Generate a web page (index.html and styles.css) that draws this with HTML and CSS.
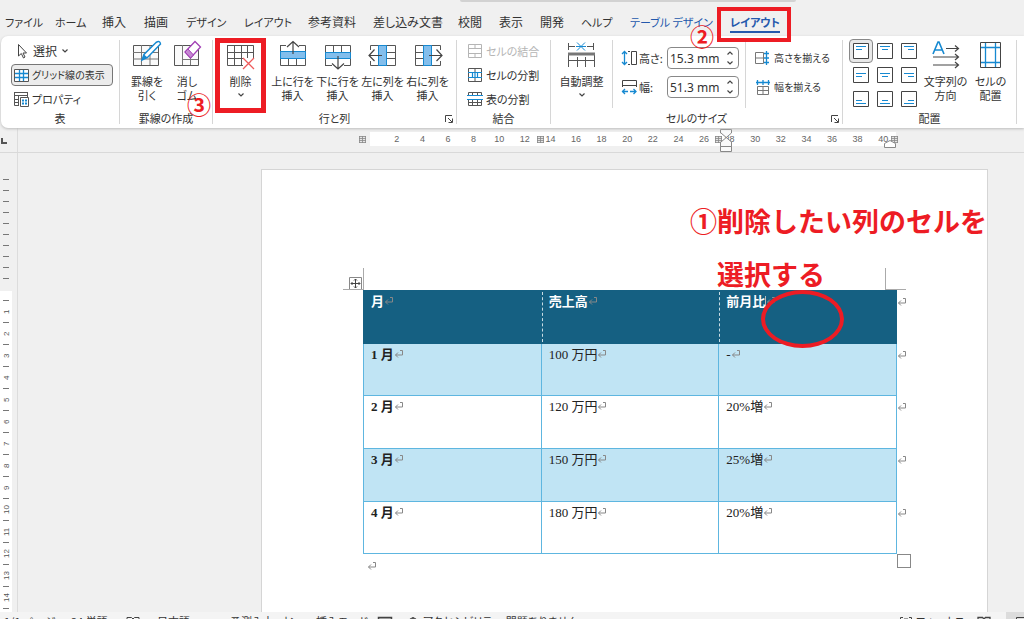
FILE: index.html
```html
<!DOCTYPE html>
<html lang="ja">
<head>
<meta charset="utf-8">
<title>文書 - レイアウト</title>
<link rel="stylesheet" href="styles.css">
</head>
<body>
<svg class="sprite" aria-hidden="true">
  <symbol id="ret" viewBox="0 0 10 10"><path d="M6 1.5H8.5V6H1.5M4 3.5L1.5 6L4 8.5" fill="none" stroke="currentColor"/></symbol>
  <symbol id="chev" viewBox="0 0 8 6"><path d="M1.5 1.5L4 4L6.500 1.500" fill="none" stroke="#444" stroke-width="1.2"/></symbol>
  <symbol id="up" viewBox="0 0 8 6"><path d="M1.500 4.500L4 2L6.500 4.500" fill="none" stroke="#444" stroke-width="1.200"/></symbol>
  <symbol id="launch" viewBox="0 0 8 8"><path d="M.5 7V.5H7M3 3L7 7M7.500 3.500V7.500H3.500" fill="none" stroke="#444"/></symbol>
  <symbol id="marker" viewBox="0 0 7 7"><path d="M0 .5H7M0 2.500H7M0 4.500H7M0 6.500H7M.5 0V7M3.500 0V7M6.500 0V7" stroke="#888" stroke-width=".8"/></symbol>
</svg>
<div class="app">
  <div class="search-edge"></div>
  <nav class="tabs">
    <button class="tab kana">ファイル</button><button class="tab kana">ホーム</button><button class="tab">挿入</button><button class="tab">描画</button><button class="tab kana">デザイン</button><button class="tab kana">レイアウト</button><button class="tab">参考資料</button><button class="tab">差し込み文書</button><button class="tab">校閲</button><button class="tab">表示</button><button class="tab">開発</button><button class="tab kana">ヘルプ</button><button class="tab kana context">テーブル デザイン</button><button class="tab kana context active">レイアウト<span class="badge step2">②</span></button>
  </nav>

  <section class="ribbon">
    <div class="group">
      <div class="rows first">
        <button class="row"><svg width="16" height="16" viewBox="0 0 16 16"><path d="M5.500 1.500V13L8.300 10.500L10.500 15L12 14L10 10H13.500Z" fill="#fff" stroke="#444"/></svg>選択<svg width="8" height="6"><use href="#chev"/></svg></button>
        <button class="row pressed"><svg width="16" height="16" viewBox="0 0 16 16"><path d="M1.500 2.500H15.500V14.500H1.500Z" fill="#fff" stroke="#555"/><path d="M6.500 3V14M10.500 3V14M2 6.500H15M2 10.500H15" stroke="#1689d1" stroke-width="1.300"/></svg>グリッド線の表示</button>
        <button class="row"><svg width="16" height="16" viewBox="0 0 16 16"><path d="M1 1.500H15M1.500 1V14.500H6M5.500 4V14M1 4.500H15M1 8.500H6M1 11.500H6M14.500 1V6" stroke="#555" fill="none"/><path d="M7.500 6.500H15.500V15.500H7.500Z" fill="#fff" stroke="#555"/><path d="M9 9.500H11M12 9.500H14M9 12.500H11M12 12.500H14" stroke="#1689d1" stroke-width="2"/></svg>プロパティ</button>
      </div>
      <div class="caption">表</div>
    </div>

    <div class="group">
      <div class="bigs pair">
        <button class="big"><svg width="30" height="28" viewBox="0 0 30 28"><path d="M1.500 5.500H26.500V25.500H1.500Z" fill="#fafafa" stroke="#555"/><path d="M9.500 5V25M18 5V25M1 12.500H26M1 19H26" stroke="#777"/><path d="M10 20L12 14.500L24 2.500Q28 0 28.500 4L15.500 17.500Z" fill="#fff" stroke="#1689d1" stroke-width="1.500"/><path d="M10 20L12 14.500L15.500 17.500Z" fill="#1689d1"/></svg><span>罫線を<br>引く</span></button>
        <button class="big"><svg width="30" height="28" viewBox="0 0 30 28"><path d="M2.500 5.500H26.500V25.500H2.500Z" fill="#fafafa" stroke="#555"/><path d="M10.500 5V25M18.500 17V25M11 19.500H26" stroke="#777"/><path d="M13 12L23 1.500L28.500 7L18.500 18Z" fill="#fff" stroke="#a23fb5" stroke-width="1.300"/><path d="M13 12L16 9L21.500 15L18.500 18Z" fill="#c588d2" stroke="#a23fb5"/></svg><span>消し<br>ゴム</span></button>
      </div>
      <div class="caption">罫線の作成<span class="badge step3">③</span></div>
    </div>

    <div class="group">
      <div class="bigs five">
        <button class="big framed"><svg width="30" height="28" viewBox="0 0 30 28"><path d="M1.500 5.500H27.500V18M17 25.500H1.500V5M8.500 5V25M15.500 5V25M21.500 5V18M1 12.500H27M1 18.500H17" fill="none" stroke="#555"/><path d="M17 18L28 29M28 18L17 29" stroke="#ef5a5a" stroke-width="1.300"/></svg><span>削除</span><svg width="8" height="6"><use href="#chev"/></svg></button>
        <button class="big"><svg width="30" height="28" viewBox="0 0 30 28"><path d="M2 5.500H8M21 5.500H27.500V25.500H2.500V5M10.500 18V25M18.500 18V25" fill="none" stroke="#555"/><path d="M2.500 11.500H27.500V18.500H2.500Z" fill="#83beec" stroke="#1689d1"/><path d="M15 14V1.500M9 7L15 1.500L21 7" fill="none" stroke="#444" stroke-width="1.200"/></svg><span>上に行を<br>挿入</span></button>
        <button class="big"><svg width="30" height="28" viewBox="0 0 30 28"><path d="M2.500 25V5.500H27.500V25.500H21M2 25.500H9M10.500 5V12M18.500 5V12" fill="none" stroke="#555"/><path d="M2.500 12.500H27.500V18.500H2.500Z" fill="#83beec" stroke="#1689d1"/><path d="M15 16V29M9 23.500L15 29L21 23.500" fill="none" stroke="#444" stroke-width="1.200"/></svg><span>下に行を<br>挿入</span></button>
        <button class="big"><svg width="30" height="28" viewBox="0 0 30 28"><path d="M2.500 10V5.500H27.500V25.500H2.500V21M19 12.500H27M19 18.500H27" fill="none" stroke="#555"/><path d="M10.500 5.500H18.500V25.500H10.500Z" fill="#83beec" stroke="#1689d1"/><path d="M14 15.500H1M6.500 9.500L1 15.500L6.500 21" fill="none" stroke="#444" stroke-width="1.200"/></svg><span>左に列を<br>挿入</span></button>
        <button class="big"><svg width="30" height="28" viewBox="0 0 30 28"><path d="M27.500 10V5.500H2.500V25.500H27.500V21M3 12.500H11M3 18.500H11" fill="none" stroke="#555"/><path d="M10.500 5.500H18.500V25.500H10.500Z" fill="#83beec" stroke="#1689d1"/><path d="M16 15.500H29M23.500 9.500L29 15.500L23.500 21" fill="none" stroke="#444" stroke-width="1.200"/></svg><span>右に列を<br>挿入</span></button>
      </div>
      <div class="caption">行と列<svg class="launch" width="8" height="8"><use href="#launch"/></svg></div>
    </div>

    <div class="group">
      <div class="rows merge">
        <button class="row" disabled><svg width="16" height="16" viewBox="0 0 16 16"><path d="M1.500 1.500H14.500V14.500H1.500ZM1 5.500H15M1 10.500H15M8 1V5.500M8 10.500V15" fill="none" stroke="#b5b5b5"/></svg>セルの結合</button>
        <button class="row"><svg width="16" height="16" viewBox="0 0 16 16"><path d="M1.500 1.500H14.500V14.500H1.500ZM8 1V5M8 11V15" fill="none" stroke="#555"/><path d="M1 5.500H15M1 10.500H15M5.500 5V11M8 5V11M10.500 5V11" stroke="#1689d1" stroke-width="1.200"/></svg>セルの分割</button>
        <button class="row"><svg width="16" height="16" viewBox="0 0 16 16"><path d="M1.500 4V1.500H14.500V4M5.500 1V4M10.500 1V4M1.500 9V14.500H14.500V9M1 11.500H15M5.500 9V15M10.500 9V15" fill="none" stroke="#555"/><path d="M0 4.500H16M0 8.500H16" stroke="#1689d1" stroke-width="1.200"/></svg>表の分割</button>
      </div>
      <div class="caption">結合</div>
    </div>

    <div class="group">
      <div class="size">
        <button class="big fit"><svg width="30" height="28" viewBox="0 0 30 28"><path d="M1.500 3V10M26.500 3V10M2 6.500H8M20 6.500H26M1.500 27V13.500H27.500V27M10.500 17V27M18.500 17V27M2 20.500H27" fill="none" stroke="#555"/><path d="M1 14H28" stroke="#777" stroke-width="3"/><path d="M10 2.500L18 10.500M18 2.500L10 10.500M9 6.500H19" stroke="#1689d1"/></svg><span>自動調整</span><svg width="8" height="6"><use href="#chev"/></svg></button>
        <div class="fields">
          <div class="field"><label for="h"><svg width="17" height="16" viewBox="0 0 17 16"><path d="M3.500 2V14M1 4L3.500 1.500L6 4M1 12L3.500 14.500L6 12" fill="none" stroke="#1689d1" stroke-width="1.300"/><path d="M7 1.500H9M7 14.500H9M10.500 1.500H15.500V14.500H10.500Z" fill="none" stroke="#444"/></svg>高さ:</label><span class="spin"><input id="h" value="15.3 mm"><span class="arrows"><button aria-label="増やす"><svg width="8" height="6"><use href="#up"/></svg></button><button aria-label="減らす"><svg width="8" height="6"><use href="#chev"/></svg></button></span></span></div>
          <div class="field"><label for="w"><svg width="17" height="16" viewBox="0 0 17 16"><path d="M1.500 8V1.500H15.500V8M1 6.500H16" fill="none" stroke="#444"/><path d="M1 12.500H7M9 12.500H15M4 10L1.500 12.500L4 15M12.500 10L15 12.500L12.500 15" fill="none" stroke="#1689d1" stroke-width="1.300"/></svg>幅:</label><span class="spin"><input id="w" value="51.3 mm"><span class="arrows"><button aria-label="増やす"><svg width="8" height="6"><use href="#up"/></svg></button><button aria-label="減らす"><svg width="8" height="6"><use href="#chev"/></svg></button></span></span></div>
        </div>
        <div class="even">
          <button class="row"><svg width="16" height="16" viewBox="0 0 16 16"><path d="M.5 2.500H8.500V13.500H.5ZM.5 8H8" fill="none" stroke="#777"/><path d="M11.500 1V15M9 3.500H14M9 8H14M9 12.500H14" stroke="#1689d1" stroke-width="1.300"/></svg>高さを揃える</button>
          <button class="row"><svg width="16" height="16" viewBox="0 0 16 16"><path d="M2.500 7.500H13.500V15.500H2.500ZM8 7V15M2 11.500H14" fill="none" stroke="#777"/><path d="M1 3.500H15M2.500 1V6M8 1V6M13.500 1V6" stroke="#1689d1" stroke-width="1.300"/></svg>幅を揃える</button>
        </div>
      </div>
      <div class="caption">セルのサイズ<svg class="launch" width="8" height="8"><use href="#launch"/></svg></div>
    </div>

    <div class="group">
      <div class="align">
        <div class="nine">
          <button class="cell on" aria-label="上揃え (左)"><svg width="16" height="16"><path class="bx" d="M.5.5H15.500V15.500H.5Z"/><path class="ln" d="M3 3.500H13M3 6.500H9"/></svg></button>
          <button class="cell" aria-label="上揃え (中央)"><svg width="16" height="16"><path class="bx" d="M.5.5H15.500V15.500H.5Z"/><path class="ln" d="M3 3.500H13M5 6.500H11"/></svg></button>
          <button class="cell" aria-label="上揃え (右)"><svg width="16" height="16"><path class="bx" d="M.5.5H15.500V15.500H.5Z"/><path class="ln" d="M3 3.500H13M7 6.500H13"/></svg></button>
          <button class="cell" aria-label="中央揃え (左)"><svg width="16" height="16"><path class="bx" d="M.5.5H15.500V15.500H.5Z"/><path class="ln" d="M3 6.500H13M3 9.500H9"/></svg></button>
          <button class="cell" aria-label="中央揃え"><svg width="16" height="16"><path class="bx" d="M.5.5H15.500V15.500H.5Z"/><path class="ln" d="M3 6.500H13M5 9.500H11"/></svg></button>
          <button class="cell" aria-label="中央揃え (右)"><svg width="16" height="16"><path class="bx" d="M.5.5H15.500V15.500H.5Z"/><path class="ln" d="M3 6.500H13M7 9.500H13"/></svg></button>
          <button class="cell" aria-label="下揃え (左)"><svg width="16" height="16"><path class="bx" d="M.5.5H15.500V15.500H.5Z"/><path class="ln" d="M3 9.500H9M3 12.500H13"/></svg></button>
          <button class="cell" aria-label="下揃え (中央)"><svg width="16" height="16"><path class="bx" d="M.5.5H15.500V15.500H.5Z"/><path class="ln" d="M5 9.500H11M3 12.500H13"/></svg></button>
          <button class="cell" aria-label="下揃え (右)"><svg width="16" height="16"><path class="bx" d="M.5.5H15.500V15.500H.5Z"/><path class="ln" d="M7 9.500H13M3 12.500H13"/></svg></button>
        </div>
        <button class="big"><svg width="30" height="28" viewBox="0 0 30 28"><path d="M2 14L7 2H8L13 14M4 10H11" fill="none" stroke="#1689d1" stroke-width="1.600"/><path d="M15 8.500H27M24 5.500L27.500 8.500L24 11.500M2 17H27M24 14L27.500 17L24 20M2 25H27M24 22L27.500 25L24 28" fill="none" stroke="#444" stroke-width="1.200"/></svg><span>文字列の<br>方向</span></button>
        <button class="big"><svg width="30" height="28" viewBox="0 0 30 28"><path d="M4.500 2.500H24.500V27.500H4.500Z" fill="#fff" stroke="#444"/><path d="M9.500 3V27M19.500 3V27M5 7.500H24M5 22.500H24" stroke="#1689d1" stroke-width="1.300"/></svg><span>セルの<br>配置</span></button>
      </div>
      <div class="caption">配置</div>
    </div>
  </section>

  <div class="hruler">
    <div class="tabstop"><svg width="6" height="6"><path d="M1 0V5H6" fill="none" stroke="#555" stroke-width="2"/></svg></div>
    <div class="scale">
      <svg class="mk" width="7" height="7"><use href="#marker"/></svg>
      <div class="numbers"><span>2</span><span>4</span><span>6</span><span>8</span><span>10</span><span>12</span><span>14</span><span>16</span><span>18</span><span>20</span><span>22</span><span>24</span><span>26</span><span>28</span><span>30</span><span>32</span><span>34</span><span>36</span><span>38</span><span>40</span></div>
      <svg class="mk over m1" width="7" height="7"><use href="#marker"/></svg>
      <svg class="mk over m2" width="7" height="7"><use href="#marker"/></svg>
      <svg class="mk over m3" width="7" height="7"><use href="#marker"/></svg>
      <svg class="over indent" width="12" height="24" viewBox="0 0 12 24"><path d="M.5.500H11.500V4L1 13H.5V17.500H11.500V13L1 4H.5ZM.5 17.500H11.500V22.500H.5Z" fill="#fafafa" stroke="#888"/></svg>
      <svg class="over right" width="12" height="8" viewBox="0 0 12 8"><path d="M.5 7.500V3.500L6 .5L11.500 3.500V7.500Z" fill="#fff" stroke="#888"/></svg>
    </div>
  </div>

  <main class="work">
    <div class="vruler">
      <div class="margin"><i></i><i></i><i></i><i></i><i></i><i></i><i></i><i></i><i></i><i></i></div>
      <div class="body"><i></i><b>1</b><i></i><b>2</b><i></i><b>3</b><i></i><b>4</b><i></i><b>5</b><i></i><b>6</b><i></i><b>7</b><i></i><b>8</b><i></i><b>9</b><i></i><b>10</b><i></i><b>11</b><i></i><b>12</b><i></i><b>13</b><i></i><b>14</b><i></i></div>
    </div>
    <div class="canvas">
      <article class="page">
        <div class="sheet">
          <svg class="move" width="13" height="13" viewBox="0 0 13 13"><path d="M.5.5H12.500V12.500H.5Z" fill="#fff" stroke="#888"/><path d="M6.500 2V11M2 6.500H11M5 3.500L6.500 2L8 3.500M5 9.500L6.500 11L8 9.500M3.500 5L2 6.500L3.500 8M9.500 5L11 6.500L9.500 8" fill="none" stroke="#444"/></svg>
          <span class="corner left"></span><span class="corner rightc"></span>
          <table>
            <thead><tr><th>月<svg class="ret"><use href="#ret"/></svg></th><th>売上高<svg class="ret"><use href="#ret"/></svg></th><th>前月比<span class="caret"></span><svg class="ret"><use href="#ret"/></svg><svg class="ret end"><use href="#ret"/></svg></th></tr></thead>
            <tbody>
              <tr class="short"><th>1 月<svg class="ret"><use href="#ret"/></svg></th><td>100 万円<svg class="ret"><use href="#ret"/></svg></td><td>-<svg class="ret"><use href="#ret"/></svg><svg class="ret end"><use href="#ret"/></svg></td></tr>
              <tr><th>2 月<svg class="ret"><use href="#ret"/></svg></th><td>120 万円<svg class="ret"><use href="#ret"/></svg></td><td>20%増<svg class="ret"><use href="#ret"/></svg><svg class="ret end"><use href="#ret"/></svg></td></tr>
              <tr><th>3 月<svg class="ret"><use href="#ret"/></svg></th><td>150 万円<svg class="ret"><use href="#ret"/></svg></td><td>25%増<svg class="ret"><use href="#ret"/></svg><svg class="ret end"><use href="#ret"/></svg></td></tr>
              <tr class="short"><th>4 月<svg class="ret"><use href="#ret"/></svg></th><td>180 万円<svg class="ret"><use href="#ret"/></svg></td><td>20%増<svg class="ret"><use href="#ret"/></svg><svg class="ret end"><use href="#ret"/></svg></td></tr>
            </tbody>
          </table>
          <span class="resize"></span>
          <p class="after"><svg class="ret"><use href="#ret"/></svg></p>
          <p class="note">①削除したい列のセルを<br>選択する</p>
          <span class="ring"></span>
        </div>
      </article>
    </div>
  </main>

  <footer class="status">
    <span class="pages">1/1 ページ</span><span class="words">24 単語</span><svg class="book" width="14" height="12" viewBox="0 0 14 12"><path d="M1 1.500H5.500L7 3L8.500 1.500H13V10H1ZM7 3V10" fill="none" stroke="#444"/></svg><span class="lang">日本語</span><span class="pred">予測入力: オン</span><span class="mode">挿入モード</span><svg class="mac" width="14" height="12" viewBox="0 0 14 12"><path d="M.5 1.500H13.500V10.500H.5ZM1 3.500H13" fill="none" stroke="#444" stroke-width="1.500"/></svg><span class="acc"><svg width="14" height="12" viewBox="0 0 14 12"><path d="M1 5Q7 0 13 5M4 3.500Q7-.5 10 3.500M7 4V10" fill="none" stroke="#444"/></svg>アクセシビリティ: 問題ありません</span>
    <span class="focus"><svg width="14" height="12" viewBox="0 0 14 12"><path d="M4 1.500H1.500V5M10 1.500H12.500V5M5 3H9V9H5Z" fill="none" stroke="#444"/></svg>フォーカス</span><svg class="read" width="14" height="12" viewBox="0 0 14 12"><path d="M1 1.500H5.500L7 3L8.500 1.500H13V10H1ZM7 3V10" fill="none" stroke="#444" stroke-width="1.300"/></svg><span class="view"><svg width="12" height="12" viewBox="0 0 12 12"><path d="M.5 1.500H11.500V11H.5ZM2 4H10" fill="none" stroke="#444"/></svg></span>
  </footer>
</div>
</body>
</html>
```
FILE: styles.css
```css
* { box-sizing: border-box; }
body { margin: 0; background: #f0f0f0; font-family: "Liberation Sans", "Noto Sans CJK JP", sans-serif; color: #333; }
button { border: 0; background: none; padding: 0; font: inherit; color: inherit; }
.sprite { position: absolute; width: 0; height: 0; }
svg { flex: none; overflow: visible; }
.app { position: relative; height: 100vh; display: flex; flex-direction: column; overflow: hidden; font: 12px/14px "Noto Sans CJK JP", sans-serif; font-feature-settings: "palt"; }
.search-edge { position: absolute; top: 0; left: 460px; width: 336px; height: 2px; background: #d2d2d2; border-radius: 0 0 4px 4px; }

.tabs { position: relative; z-index: 3; flex: none; height: 36px; padding: 10px 0 0 5px; display: grid; grid-template-columns: 50px 47px 42px 42px 58px 64px 65px 85px 41px 41px 41px 49px 100px 50px; }
.tab { position: relative; height: 24px; text-align: left; white-space: nowrap; }
.kana { font-size: 11px; }
.context { color: #2458ac; }
.active { font-weight: 700; }
.active::before { content: ""; position: absolute; left: 0; right: 0; bottom: 1px; height: 2px; background: #2458ac; }
.active::after { content: ""; position: absolute; inset: -3px -11px -8px -13px; border: 4px solid #ed1c24; }
.badge { position: absolute; z-index: 3; color: #ed1c24; font: 700 24px/24px "Noto Sans CJK JP", sans-serif; }
.step2 { left: -40px; top: 14px; }
.step3 { left: 67px; top: -19px; }

.ribbon { flex: none; position: relative; z-index: 2; height: 92px; margin-left: 1px; padding-top: 4px; background: #fff; border-radius: 7px 0 0 7px; box-shadow: 0 1px 3px #bbb; display: grid; grid-template-columns: 119px 93px 244px 94px 292px 174px; }
.group { height: 84px; border-right: 1px solid #d6d6d6; display: flex; flex-direction: column; }
.caption { position: relative; flex: none; height: 14px; margin-top: auto; text-align: center; font-size: 11px; margin-bottom: -1px; }
.launch { position: absolute; right: 3px; top: 4px; }
.rows { padding: 0 10px; display: flex; flex-direction: column; gap: 2px; align-items: flex-start; }
.merge { padding: 0 8px; }
.row { height: 22px; display: flex; align-items: center; gap: 3px; padding: 0 2px; font-size: 11px; white-space: nowrap; }
.row:disabled { color: #b5b5b5; }
.first .row:first-child { gap: 4px; font-size: 12px; }
.first .pressed { width: 102px; border: 1px solid #777; border-radius: 4px; background: #ececec; padding: 0 1px; font-size: 10px; }
.bigs, .align { display: flex; }
.pair { padding-left: 7px; }
.pair .big { width: 40px; }
.five { padding-left: 2px; }
.big { width: 45px; height: 68px; display: flex; flex-direction: column; align-items: center; justify-content: flex-start; font-size: 11px; white-space: nowrap; }
.big span { margin-top: 6px; }
.big > svg + span + svg { margin-top: 4px; }
.framed { position: relative; width: 51px; margin-right: 4px; }
.framed::after { content: ""; position: absolute; inset: -2px 0 -5px 0; border: 5px solid #ed1c24; }
.size { display: flex; }
.fit { width: 62px; border-right: 1px solid #d6d6d6; }
.fields { display: flex; flex-direction: column; gap: 7px; padding: 7px 6px 0 8px; border-right: 1px solid #d6d6d6; }
.field { display: flex; align-items: center; justify-content: space-between; width: 118px; }
.field label { display: flex; align-items: center; font-size: 11px; gap: 1px; }
.spin { display: flex; width: 72px; height: 22px; border: 1px solid #888; border-radius: 4px; background: #fff; }
.spin input { min-width: 0; flex: 1; border: 0; padding: 0 0 0 2px; outline: 0; background: none; color: #333; font: 12px "Noto Sans", sans-serif; }
.arrows { display: flex; flex-direction: column; justify-content: space-around; width: 16px; align-items: center; }
.arrows button { display: flex; }
.even { display: flex; flex-direction: column; gap: 7px; padding: 7px 0 0 7px; }
.even .row { font-size: 10px; }
.nine { display: grid; grid-template-columns: repeat(3, 24px); grid-template-rows: repeat(3, 24px); padding: 0 2px 0 6px; margin-top: -1px; }
.cell { width: 24px; height: 24px; display: flex; align-items: center; justify-content: center; }
.on { background: #e8e8e8; border: 1px solid #888; border-radius: 4px; }
.bx { fill: #fff; stroke: #444; }
.ln { stroke: #1689d1; }

.hruler { flex: none; display: flex; height: 25px; border-bottom: 1px solid #d9d9d9; }
.tabstop { width: 18px; border-right: 1px solid #dcdcdc; padding: 10px 0 0 1px; line-height: 0; }
.scale { position: relative; margin: 4px 0 6px 341px; display: flex; align-items: center; }
.mk { background: #e6e6e6; }
.numbers { display: grid; grid-template-columns: repeat(20, 1fr); width: 526px; padding-left: 14px; margin-left: 4px; background: #fff; text-align: center; font: 9px/14px "Liberation Sans", sans-serif; color: #666; }
.over { position: absolute; }
.m1 { left: 178px; } .m2 { left: 356px; } .m3 { left: 532px; }
.indent { left: 361px; top: -3px; }
.right { left: 525px; top: 8px; }

.work { flex: 1; min-height: 0; display: flex; overflow: hidden; }
.vruler { flex: none; width: 18px; border-right: 1px solid #dcdcdc; padding-top: 21px; }
.margin { height: 117px; }
.body { width: 12px; background: #fff; padding-top: 4px; }
.vruler i { display: flex; height: 11px; width: 9px; align-items: center; justify-content: flex-end; }
.vruler i::after { content: ""; width: 6px; height: 1px; background: #777; }
.vruler b { display: flex; height: 11px; width: 12px; align-items: center; justify-content: center; writing-mode: vertical-rl; transform: rotate(180deg); font: 8px/11px "Liberation Sans", sans-serif; color: #555; }
.canvas { flex: 1; padding: 16px 36px 0 243px; }
.page { height: 100%; background: #fff; border: 1px solid #d5d5d5; border-bottom: 0; padding: 120px 90px 0 101px; }
.sheet { position: relative; font-feature-settings: normal; }
table { width: 100%; table-layout: fixed; border-collapse: collapse; font: 13px/18px "Liberation Serif", "Noto Sans CJK JP", serif; color: #222; }
th, td { position: relative; height: 53px; padding: 2px 7px 0; vertical-align: top; text-align: left; border: 1px solid #5eb6e0; white-space: nowrap; }
.short > * { height: 52px; }
thead th { background: #156082; color: #fff; border-color: #156082; }
thead th + th::before { content: ""; position: absolute; left: 0; top: 1px; bottom: 1px; border-left: 1px dashed #c8dce4; }
tbody tr:nth-child(odd) > * { background: #c0e4f4; }
.ret { width: 10px; height: 10px; color: #888; }
.end { position: absolute; right: -11px; top: 6px; }
.caret { display: inline-block; width: 1px; height: 15px; background: #bbb; vertical-align: middle; }
.after { margin: 6px 0 0 4px; line-height: 12px; }
.resize { position: absolute; right: -14px; top: 264px; width: 14px; height: 14px; border: 1px solid #888; background: #fff; }
.move { position: absolute; left: -14px; top: -13px; }
.corner { position: absolute; top: -22px; width: 21px; height: 22px; border-bottom: 1px solid #aaa; }
.left { left: -20px; border-right: 1px solid #aaa; }
.rightc { right: -9px; border-left: 1px solid #aaa; }
.note { position: absolute; right: -90px; top: -96px; margin: 0; padding-left: 27px; text-indent: -27px; color: #ed1c24; font: 700 27px/53px "Noto Sans CJK JP", sans-serif; white-space: nowrap; }
.ring { position: absolute; right: 53px; top: 0; width: 83px; height: 58px; border: 4px solid #ed1c24; border-radius: 50%; }

.status { flex: none; height: 7px; background: #f4f4f4; padding: 3px 0 0 4px; display: grid; grid-template-columns: 67px 55px 31px 73px 86px 62px 28px 493px 78px 29px 1fr; overflow: hidden; font-size: 11px; line-height: 12px; align-items: start; white-space: nowrap; }
.status svg { margin-top: 1px; }
.acc, .focus { display: flex; gap: 3px; }
.view { background: #dcdcdc; margin-top: -3px; padding: 3px 0 0 10px; height: 20px; }
```
